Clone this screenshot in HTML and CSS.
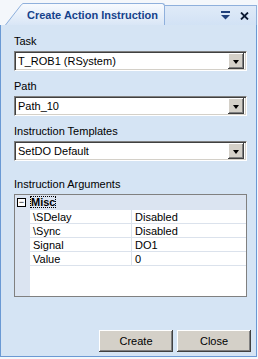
FILE: index.html
```html
<!DOCTYPE html>
<html lang="en">
<head>
    <meta charset="UTF-8">
    <title>Create Action Instruction</title>
    <link rel="stylesheet" href="styles.css">
</head>
<body>
    <div class="panel">
        <div class="header">
            <div class="tab">
                <svg class="slant" width="18" height="22" viewBox="0 0 18 22">
                    <defs>
                        <linearGradient id="tabfill" x1="0" y1="0" x2="0" y2="1">
                            <stop offset="0" stop-color="#f7fafe"/>
                            <stop offset="1" stop-color="#d9e6f6"/>
                        </linearGradient>
                    </defs>
                    <path d="M0 22 L16 1 L18 0 L18 22 Z" fill="url(#tabfill)"/>
                    <path d="M0.5 22 L16.5 1.5 L18 0.5" fill="none" stroke="#8fb0dc"/>
                </svg>
                <div class="tab-label">Create Action Instruction</div>
            </div>
            <div class="band">
                <svg class="icon" width="9" height="9" viewBox="0 0 9 9">
                    <rect x="0" y="0" width="9" height="2" fill="#1f3f7a"/>
                    <path d="M0 4 H9 L4.5 8.5 Z" fill="#1f3f7a"/>
                </svg>
                <svg class="icon" width="9" height="8" viewBox="0 0 9 8">
                    <path d="M1 0.5 L8 7.5 M8 0.5 L1 7.5" stroke="#0d1a33" stroke-width="1.8"/>
                </svg>
            </div>
        </div>

        <div class="content">
            <label class="caption">Task</label>
            <div class="combo">
                <span class="combo-text">T_ROB1 (RSystem)</span>
                <span class="drop"><span class="arrow"></span></span>
            </div>

            <label class="caption">Path</label>
            <div class="combo">
                <span class="combo-text">Path_10</span>
                <span class="drop"><span class="arrow"></span></span>
            </div>

            <label class="caption">Instruction Templates</label>
            <div class="combo">
                <span class="combo-text">SetDO Default</span>
                <span class="drop"><span class="arrow"></span></span>
            </div>

            <label class="caption args">Instruction Arguments</label>
            <div class="grid">
                <div class="category">
                    <span class="toggle">&minus;</span>
                    <span class="cat-name">Misc</span>
                </div>
                <div class="prop">
                    <span class="gutter"></span>
                    <span class="name">\SDelay</span>
                    <span class="value">Disabled</span>
                </div>
                <div class="prop">
                    <span class="gutter"></span>
                    <span class="name">\Sync</span>
                    <span class="value">Disabled</span>
                </div>
                <div class="prop">
                    <span class="gutter"></span>
                    <span class="name">Signal</span>
                    <span class="value">DO1</span>
                </div>
                <div class="prop">
                    <span class="gutter"></span>
                    <span class="name">Value</span>
                    <span class="value">0</span>
                </div>
            </div>

            <div class="buttons">
                <button type="button">Create</button>
                <button type="button">Close</button>
            </div>
        </div>
    </div>
</body>
</html>
```

FILE: styles.css
```css
body {
    margin: 0;
    background-color: #f4f7fb;
    font-family: "Liberation Sans", Arial, sans-serif;
    font-size: 11px;
    color: #000;
}
.panel {
    width: 257px;
    height: 357px;
    box-sizing: border-box;
    display: flex;
    flex-direction: column;
}
.header {
    display: flex;
    align-items: flex-end;
    height: 25px;
}
.tab {
    display: flex;
    align-items: flex-end;
    margin-left: 5px;
}
.slant {
    display: block;
}
.tab-label {
    width: 137px;
    height: 21px;
    padding-left: 4px;
    border-top: 1px solid #8fb0dc;
    border-right: 1px solid #8fb0dc;
    border-top-right-radius: 3px;
    background: linear-gradient(#f7fafe, #d9e6f6);
    color: #15428b;
    font-weight: bold;
    line-height: 22px;
}
.band {
    flex: 1;
    height: 19px;
    display: flex;
    align-items: center;
    justify-content: flex-end;
    gap: 10px;
    padding-right: 7px;
    border-top: 1px solid #8fb0dc;
    border-right: 1px solid #8fb0dc;
    background: linear-gradient(#dfeaf8, #d2e2f5);
}
.icon {
    display: block;
}
.content {
    flex: 1;
    display: flex;
    flex-direction: column;
    padding: 10px 9px 4px 13px;
    background-color: #d5e4f4;
    border-left: 1px solid #6a99d4;
    border-right: 1px solid #6a99d4;
    border-bottom: 1px solid #6a99d4;
}
.caption {
    display: block;
    line-height: 13px;
    margin-bottom: 3px;
}
.args {
    margin-top: 8px;
}
.combo {
    display: flex;
    align-items: center;
    height: 20px;
    box-sizing: border-box;
    margin-bottom: 9px;
    background-color: #fff;
    border-top: 1px solid #808080;
    border-left: 1px solid #808080;
    border-right: 1px solid #fff;
    border-bottom: 1px solid #fff;
    box-shadow: inset 1px 1px 0 #404040, inset -1px -1px 0 #d4d0c8;
}
.combo-text {
    flex: 1;
    padding-left: 3px;
}
.drop {
    width: 16px;
    height: 16px;
    box-sizing: border-box;
    margin-right: 2px;
    display: flex;
    align-items: center;
    justify-content: center;
    background-color: #d4d0c8;
    box-shadow: inset -1px -1px 0 #404040, inset 1px 1px 0 #fff, inset -2px -2px 0 #808080;
}
.arrow {
    width: 0;
    height: 0;
    border-left: 3.5px solid transparent;
    border-right: 3.5px solid transparent;
    border-top: 4px solid #000;
    margin-top: 1px;
}
.grid {
    height: 103px;
    box-sizing: border-box;
    border: 1px solid #808080;
    background-color: #fff;
    background-image: linear-gradient(#dbe4f1, #dbe4f1);
    background-size: 15px 100%;
    background-repeat: no-repeat;
}
.category,
.prop {
    display: flex;
    height: 14px;
    line-height: 14px;
}
.category {
    align-items: center;
    background-color: #dbe4f1;
    border-bottom: 1px solid #dbe4f1;
}
.toggle {
    width: 7px;
    height: 7px;
    margin-left: 2px;
    border: 1px solid #000;
    background-color: #fff;
    font-size: 9px;
    line-height: 6px;
    text-align: center;
}
.cat-name {
    margin-left: 4px;
    padding: 0 1px;
    line-height: 12px;
    font-weight: bold;
    outline: 1px dotted #000;
    outline-offset: -1px;
}
.gutter {
    width: 15px;
}
.name,
.value {
    border-bottom: 1px solid #dbe2ec;
    padding-left: 3px;
}
.name {
    width: 98px;
    border-right: 1px solid #dbe2ec;
}
.value {
    flex: 1;
}
.buttons {
    margin-top: auto;
    display: flex;
    justify-content: flex-end;
    gap: 4px;
    margin-right: -4px;
}
button {
    width: 74px;
    height: 22px;
    font-family: inherit;
    font-size: 11px;
    background-color: #d4d0c8;
    border: none;
    padding: 0;
    box-shadow: inset -1px -1px 0 #404040, inset 1px 1px 0 #fff, inset -2px -2px 0 #808080;
}
```
